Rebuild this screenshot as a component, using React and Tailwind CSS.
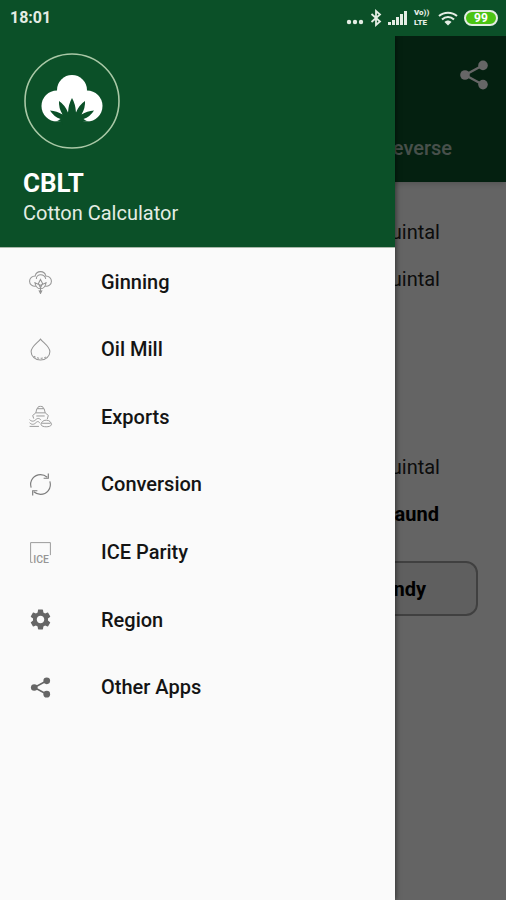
import { MdSettings } from "react-icons/md";

const ShareIcon = ({ className }) => (
    <svg viewBox="0 0 24 24" className={className} fill="currentColor" aria-hidden="true">
        <path d="M18 5.500 6 12l12 6.500" fill="none" stroke="currentColor" strokeWidth="1.5" />
        <circle cx="18" cy="5.600" r="3.200" />
        <circle cx="6" cy="12" r="3.200" />
        <circle cx="18" cy="18.400" r="3.200" />
    </svg>
);

const CottonIcon = ({ className }) => (
    <svg viewBox="0 0 24 24" className={className} fill="none" stroke="currentColor" strokeWidth="1" aria-hidden="true">
        <path d="M7 6.500C7.500 4 9.500 2.500 12 2.500s4.500 1.500 5 4" />
        <path d="M8 9.500C8 7 10 5.500 12 5.500c2.500 0 4.500 1.500 5 4" />
        <path d="M7.500 16.500C4.500 17 1.500 15 1.500 11.800 1.500 9 4 6.500 7.500 6.800" />
        <path d="M16.500 16.500c3 .5 6-1.500 6-4.700 0-2.800-2.500-5.300-6-5" />
        <path d="m12 10 2 4-2 4-2-4zM6.500 12.500c.5 3.500 2.500 6.500 5.500 6.500s5-3 5.500-6.500M7 13.500l5 2 5-2" />
        <path d="M12 19v4.500M10.500 20.500 12 23.500l1.500-3" />
    </svg>
);

const DropIcon = ({ className }) => (
    <svg viewBox="0 0 24 24" className={className} fill="none" stroke="currentColor" strokeWidth="1" aria-hidden="true">
        <path d="M12 2C9.500 5.500 3 9 3 14.200 3 18.500 7 22 12 22s9-3.500 9-7.800C21 9 14.500 5.500 12 2z" />
        <path d="M5.500 18.500c3.500 2.500 9.500 2.500 13 0" strokeDasharray="2 1.500" />
    </svg>
);

const ShipIcon = ({ className }) => (
    <svg viewBox="0 0 24 24" className={className} fill="none" stroke="currentColor" strokeWidth="0.9" aria-hidden="true">
        <path d="M9.500 4.500V3c.5-1 4.500-1 5 0v1.500M7.500 8.500l1-4h7l1 4" />
        <path d="M5.500 14 4.500 11l3-2.500h9l3 2.500-1 3.500M8 11.500h8" />
        <path d="M1.500 15c2 2 4 2 6 0s4-1 5 .5M1.500 18c2 2 4 2 6 0s3-1 4 .5M1.500 21.500h9" />
        <path d="M12.500 20c0-2.500 2-4.500 5-4.500s5 2 5 4.500c-1 2.500-9 2.500-10 0zM13.500 18.500h8" />
    </svg>
);

const ConvertIcon = ({ className }) => (
    <svg viewBox="0 0 24 24" className={className} fill="none" stroke="currentColor" strokeWidth="1.1" aria-hidden="true">
        <path d="M3 15C1 8 6 2.500 12 2.500c2.500 0 4.500.8 6.500 2.500M21 9c2 7-3 12.500-9 12.500-2.500 0-4.500-.8-6.500-2.500" />
        <path d="M19.500 1.500v4.500H15M4.500 22.500V18H9" />
    </svg>
);

const IceIcon = ({ className }) => (
    <svg viewBox="0 0 24 24" className={className} fill="none" stroke="currentColor" strokeWidth="0.9" aria-hidden="true">
        <path d="M4.500 21.500h-2v-19h19v12" />
        <text x="5" y="22" fontSize="10" fill="currentColor" stroke="none" fontFamily="Roboto, sans-serif">
            ICE
        </text>
    </svg>
);

const LogoIcon = ({ className }) => (
    <svg viewBox="0 0 96 96" className={className} aria-hidden="true">
        <circle cx="48" cy="48" r="47" fill="none" stroke="#a9c8a6" strokeWidth="1.600" />
        <g fill="#ffffff">
            <circle cx="48" cy="37" r="15" />
            <circle cx="33" cy="53" r="15.500" />
            <circle cx="63" cy="53" r="15.500" />
            <path d="M36 40h24v24H36z" />
        </g>
        <path
            fill="#0b5028"
            d="M38 72 39 68.500 31 68.500Q34 68 36.500 66Q30 64 26 57.500Q33 58 38.500 61.500Q34.500 55 35 48Q41 52 44 59.500Q44.500 51 48 45Q51.500 51 52 59.500Q55 52 61 48Q61.500 55 57.500 61.500Q63 58 70 57.500Q66 64 59.500 66Q62 68 65 68.500L57 68.500 58 72z"
        />
    </svg>
);

const menuItems = [
    { label: "Ginning", Icon: CottonIcon, color: "text-[#959595]" },
    { label: "Oil Mill", Icon: DropIcon, color: "text-[#959595]" },
    { label: "Exports", Icon: ShipIcon, color: "text-[#959595]" },
    { label: "Conversion", Icon: ConvertIcon, color: "text-[#7c7c7c]" },
    { label: "ICE Parity", Icon: IceIcon, color: "text-[#959595]" },
    { label: "Region", Icon: MdSettings, color: "text-[#666666]" },
    { label: "Other Apps", Icon: ShareIcon, color: "text-[#666666]" },
];

const units = ["Quintal", "Quintal", "", "", "", "Quintal", "Maund"];

const StatusBar = () => (
    <div className="flex h-9 items-center justify-between bg-[#0b5028] pr-2 pl-2.5 text-[#e4ede4]">
        <span className="text-base font-bold">18:01</span>
        <div className="flex items-center gap-1.5">
            <svg viewBox="0 0 18 16" className="h-4 w-[18px]" fill="currentColor" aria-hidden="true">
                <circle cx="3" cy="12" r="2.200" />
                <circle cx="9" cy="12" r="2.200" />
                <circle cx="15" cy="12" r="2.200" />
            </svg>
            <svg viewBox="0 0 12 18" className="h-[18px] w-3" fill="none" stroke="currentColor" strokeWidth="1.800" aria-hidden="true">
                <path d="m1.500 5 8.500 7.500L6 16V2l4 3.500L1.500 13" />
            </svg>
            <svg viewBox="0 0 20 16" className="h-4 w-5" fill="currentColor" aria-hidden="true">
                <path d="M0 12h3v3H0zM4 10h3v5H4zM8 7h3v8H8zM12 4h3v11h-3zM16 1h3v14h-3z" />
            </svg>
            <span className="flex w-[18px] flex-col text-[8px] leading-[10px] font-black">
                <span>Vo))</span>
                <span>LTE</span>
            </span>
            <svg viewBox="0 0 20 16" className="h-4 w-5" fill="none" stroke="currentColor" strokeWidth="2" aria-hidden="true">
                <path d="M1 6c5-4.500 13-4.500 18 0" />
                <path d="M4 9.500c3.500-3.500 8.500-3.500 12 0" />
                <path d="M6.500 12c2-2 5-2 7 0L10 15.500z" fill="currentColor" stroke="none" />
            </svg>
            <span className="flex h-4 w-[34px] items-center justify-center rounded-full border-2 border-[#e4ede4] bg-[#4cc414] text-xs font-bold text-white">
                99
            </span>
        </div>
    </div>
);

const CalculatorPage = () => (
    <main className="min-h-full bg-[#fafafa]">
        <header className="bg-[#0b5028] text-white shadow-md">
            <div className="flex h-[78px] items-center justify-end pr-3.5">
                <button type="button" aria-label="Share">
                    <ShareIcon className="size-9" />
                </button>
            </div>
            <nav className="flex h-[68px] items-center justify-end pr-[54px]">
                <a href="#reverse" className="text-xl font-medium text-white/70">Reverse</a>
            </nav>
        </header>
        <div className="flex flex-col items-end pt-[26px] pr-7">
            {units.map((unit, index) => (
                <div
                    key={index}
                    className={
                        unit === "Maund"
                            ? "flex h-[47px] w-[101px] items-center text-xl font-bold text-black"
                            : "flex h-[47px] w-[101px] items-center text-xl text-[#222222]"
                    }
                >
                    {unit}
                </div>
            ))}
            <button
                type="button"
                className="mt-6 h-[55px] w-40 rounded-xl border-2 border-[#a0a0a0] bg-[#ededed] text-xl font-bold text-black"
            >
                Candy
            </button>
        </div>
    </main>
);

const Drawer = () => (
    <aside className="absolute inset-y-0 left-0 w-[78%] bg-[#fafafa] shadow-[1px_0_5px_rgba(0,0,0,0.5)]">
        <div className="border-b border-[#a9b8a9] bg-[#0b5028] px-[23px] pt-[17px] pb-[22px] text-white">
            <LogoIcon className="ml-px size-24" />
            <h1 className="mt-4 text-[26px] leading-9 font-bold">CBLT</h1>
            <p className="text-xl leading-6 text-[#e4ede4]">Cotton Calculator</p>
        </div>
        <nav>
            <ul className="grid h-[473px] grid-rows-7">
                {menuItems.map(({ label, Icon, color }) => (
                    <li key={label}>
                        <a href="#menu" className="flex h-full items-center gap-12 pl-7 text-xl font-medium text-[#141414]">
                            <Icon className={`size-[25px] shrink-0 ${color}`} />
                            {label}
                        </a>
                    </li>
                ))}
            </ul>
        </nav>
    </aside>
);

const App = () => {
    return (
        <div className="flex min-h-screen flex-col font-[Roboto,sans-serif]">
            <StatusBar />
            <div className="relative grid flex-1 overflow-hidden">
                <CalculatorPage />
                <div className="absolute inset-0 bg-black/60" />
                <Drawer />
            </div>
        </div>
    );
};

export default App;
